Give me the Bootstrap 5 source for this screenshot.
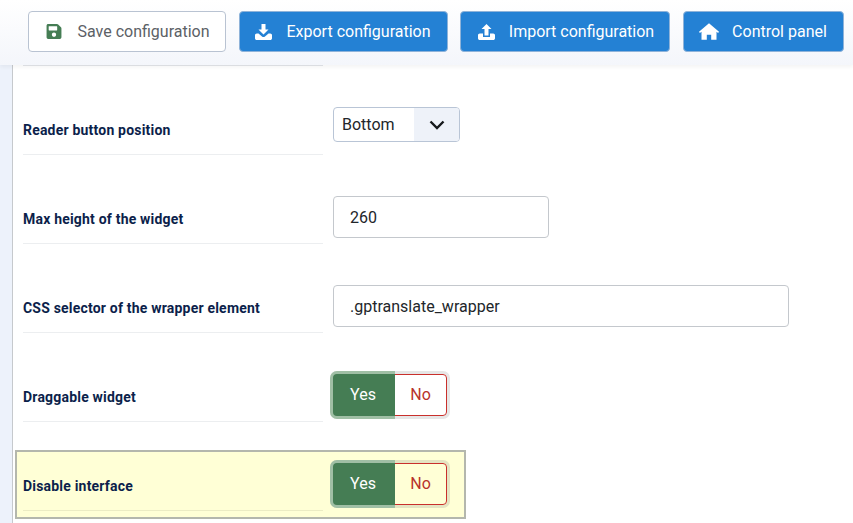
<!DOCTYPE html>
<html lang="en">
<head>
<meta charset="utf-8">
<title>Configuration</title>
<link href="https://cdn.jsdelivr.net/npm/bootstrap@5.3.0/dist/css/bootstrap.min.css" rel="stylesheet">
<style>
html,body{height:523px;overflow:hidden}
body{font-family:Roboto,"Liberation Sans",sans-serif;font-size:16px;background:#fff;color:#22262a}
.shell{height:523px}
.stripe{width:13px;flex:none;background:#edf2fb;border-right:1px solid #c6c9cd}
.tool-bar{height:65px;padding:11px 9px 0 28px;gap:12.5px;background:linear-gradient(#fff,#f4f6fb);box-shadow:0 2px 4px rgba(0,0,0,.05);position:relative;z-index:2}
.tool-btn{height:41px;font-size:16px;line-height:1;padding:0;border-radius:4px;display:flex;align-items:center;justify-content:center;gap:13px;white-space:nowrap}
.tool-btn svg{fill:currentColor;height:17px;width:20px;flex:none}
.tool-btn svg.ico-tray{width:17px;height:16px}
.b1{gap:14px}
.btn-save{width:198px;background:#fff;border:1px solid #b9c3d2;color:#5c6166}
.btn-save svg{color:#457d54}
.btn-blue{background:#2481d4;border:1px solid #8fb3d9;color:#fff}
.b1{width:209px}.b2{width:210px;padding-left:2px;gap:14px}.b3{width:161px}
.pane{padding-left:10px;position:relative}
.first-rule{width:300px;height:1px;background:#e4e6ea}
.cfg-row{height:89px;display:flex}
.cfg-label{width:300px;flex:none;align-self:flex-end;height:48px;padding-top:13px;margin:0;font-size:14px;font-weight:700;line-height:20px;color:#0c1f4b;border-bottom:1px solid #eceef0;letter-spacing:.2px}
.cfg-ctl{margin:41px 0 0 10px}
.sel-box{width:127px;height:35px;border:1px solid #b9c5d6;border-radius:4px;overflow:hidden;display:flex;background:#fff;color:#22262a}
.sel-text{padding-left:8px;line-height:33px;flex:1}
.sel-arrow{width:45px;background:#eef2f9;display:flex;align-items:center;justify-content:center}
.text-in{height:42px;border:1px solid #c4c8cd;border-radius:4px;padding:0 16px;font-size:16px;color:#22262a;background:#fff}
.w-short{width:216px}.w-long{width:456px}
.yn{display:flex;height:42px;border-radius:4px;box-shadow:0 0 0 3px #e6e6e6}
.yn-y,.yn-n{display:flex;align-items:center;justify-content:center;font-size:16px;height:42px}
.yn-y{width:62px;padding-right:2px;background:#457d54;color:#fff;border-radius:4px 0 0 4px;box-shadow:0 0 0 3px #a0bfa5;position:relative;clip-path:inset(-3px 0 -3px -3px)}
.yn-n{width:53px;border:1px solid #c9302c;border-radius:0 4px 4px 0;color:#b8322b;margin-left:-1px;background:#fff}
.spot{margin:28px 0 0 -8px;width:451px;height:69px;border:2px solid #b4b7ad;background:#ffffd6;padding-left:6px;display:flex}
.spot .cfg-label{height:47px;padding-top:12px;align-self:flex-start;margin-top:12px;border-color:#ececc4}
.spot .cfg-ctl{margin-top:11px}
.spot .yn{box-shadow:0 0 0 3px #e4e4c2}
.spot .yn-n{background:transparent}
</style>
</head>
<body>
<div class="shell d-flex flex-column">
  <div class="tool-bar d-flex">
    <button class="btn tool-btn btn-save" type="button"><svg viewBox="0 0 448 512"><path d="M433.941 129.941l-83.882-83.882A48 48 0 0 0 316.118 32H48C21.49 32 0 53.49 0 80v352c0 26.51 21.49 48 48 48h352c26.51 0 48-21.49 48-48V163.882a48 48 0 0 0-14.059-33.941zM224 416c-35.346 0-64-28.654-64-64 0-35.346 28.654-64 64-64s64 28.654 64 64c0 35.346-28.654 64-64 64zm96-304.52V212c0 6.627-5.373 12-12 12H76c-6.627 0-12-5.373-12-12V108c0-6.627 5.373-12 12-12h228.52c3.183 0 6.235 1.264 8.485 3.515l3.48 3.48A11.996 11.996 0 0 1 320 111.48z"/></svg>Save configuration</button>
    <button class="btn tool-btn btn-blue b1" type="button"><svg class="ico-tray" viewBox="0 0 17 16"><path d="M6.500 0h4v5.500h3L8.500 10.500 3.500 5.500h3zM1.800 9.500h1.700l3.500 3c.9.7 2.100.7 3 0l3.500-3h1.700c1 0 1.800.8 1.800 1.800v2.900c0 1-.8 1.800-1.800 1.800H1.800C.8 16 0 15.200 0 14.200v-2.900c0-1 .8-1.800 1.800-1.800z"/></svg>Export configuration</button>
    <button class="btn tool-btn btn-blue b2" type="button"><svg class="ico-tray" viewBox="0 0 17 16"><path d="M8.500 0l5 5h-3v6.500h-4V5h-3zM1.800 9.500h3.200v3.500h7V9.500h3.200c1 0 1.800.8 1.800 1.800v2.900c0 1-.8 1.800-1.800 1.800H1.800C.8 16 0 15.200 0 14.200v-2.900c0-1 .8-1.800 1.800-1.800z"/></svg>Import configuration</button>
    <button class="btn tool-btn btn-blue b3" type="button"><svg viewBox="0 0 20 17"><path d="M10 .3L0 8.800l.9 1.100L2.500 8.700v8.100h5.300v-5h4.400v5h5.300V8.700l1.600 1.200.9-1.100z"/></svg>Control panel</button>
  </div>
  <div class="d-flex flex-grow-1">
    <div class="stripe"></div>
    <div class="pane flex-grow-1">
      <div class="first-rule"></div>
      <div class="cfg-row">
        <p class="cfg-label">Reader button position</p>
        <div class="cfg-ctl"><div class="sel-box"><span class="sel-text">Bottom</span><span class="sel-arrow"><svg width="16" height="10" viewBox="0 0 16 10"><path d="M1.500 1.500L8 8l6.500-6.500" fill="none" stroke="#16191c" stroke-width="2.400"/></svg></span></div></div>
      </div>
      <div class="cfg-row">
        <p class="cfg-label">Max height of the widget</p>
        <div class="cfg-ctl"><input class="text-in w-short d-block" type="text" value="260"></div>
      </div>
      <div class="cfg-row">
        <p class="cfg-label">CSS selector of the wrapper element</p>
        <div class="cfg-ctl"><input class="text-in w-long d-block" type="text" value=".gptranslate_wrapper"></div>
      </div>
      <div class="cfg-row">
        <p class="cfg-label">Draggable widget</p>
        <div class="cfg-ctl"><div class="yn"><span class="yn-y">Yes</span><span class="yn-n">No</span></div></div>
      </div>
      <div class="spot">
        <p class="cfg-label">Disable interface</p>
        <div class="cfg-ctl"><div class="yn"><span class="yn-y">Yes</span><span class="yn-n">No</span></div></div>
      </div>
    </div>
  </div>
</div>
</body>
</html>
